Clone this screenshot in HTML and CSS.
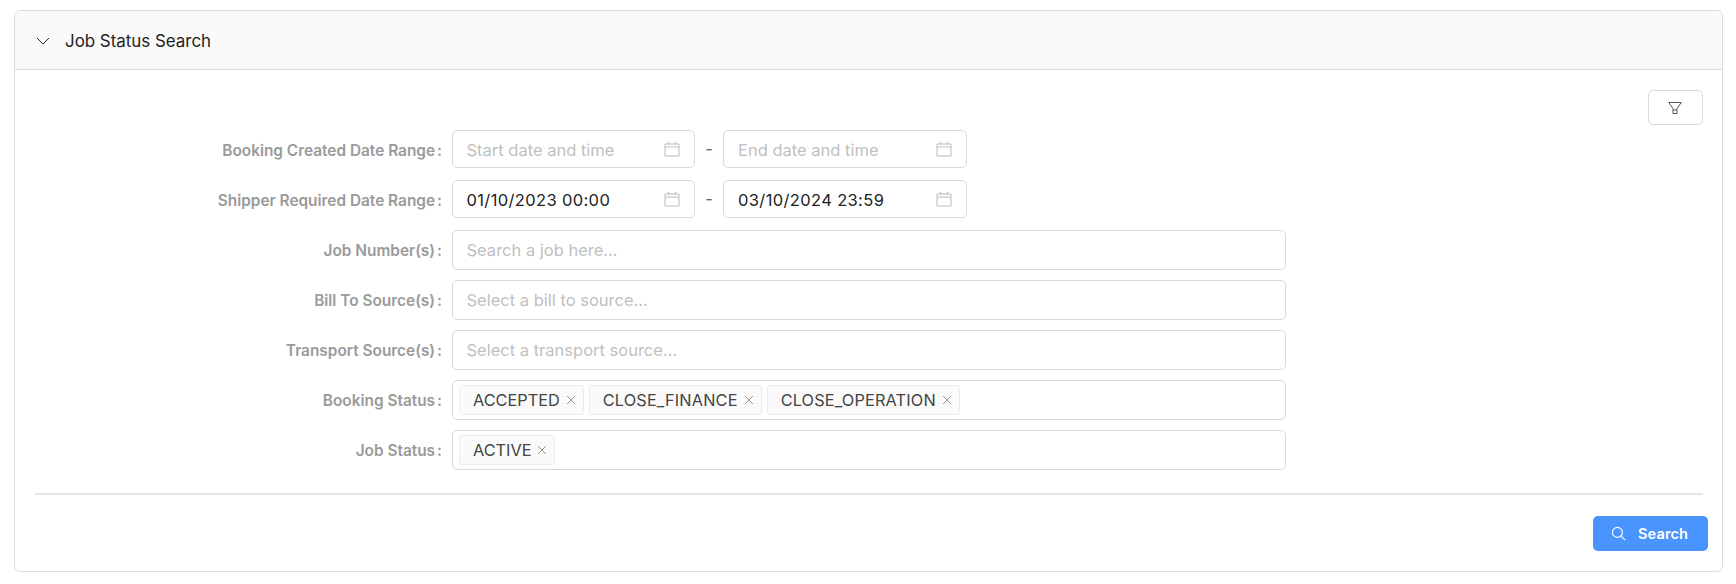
FILE: index.html
```html
<!DOCTYPE html>
<html lang="en">
<head>
<meta charset="utf-8">
<title>Job Status Search</title>
<link rel="stylesheet" href="styles.css">
</head>
<body>
<section class="card">
  <header class="card-head">
    <svg class="chev" viewBox="0 0 14 14" width="14" height="14"><path d="M1 4 7 10l6-6" fill="none" stroke="#222" stroke-width="1"/></svg>
    <span class="title">Job Status Search</span>
  </header>
  <div class="card-body">
    <div class="tools">
      <button class="filter-btn" type="button" aria-label="Filter">
        <svg viewBox="0 0 14 14" width="14" height="14"><path d="M.8 1.500h12.400L9 7.500v5H5v-5zM5 9h4" fill="none" stroke="#555" stroke-width="1"/></svg>
      </button>
    </div>
    <form class="form">
      <label class="lbl">Booking Created Date Range<i>:</i></label>
      <div class="range">
        <div class="date"><span class="ph">Start date and time</span><svg class="cal" viewBox="0 0 16 16" width="16" height="16"><path d="M1 3h14v12H1zM1 6h14M4.500 1v3M11.500 1v3" fill="none" stroke="#bdbdbd" stroke-width="1"/></svg></div>
        <span class="dash">-</span>
        <div class="date end"><span class="ph">End date and time</span><svg class="cal" viewBox="0 0 16 16" width="16" height="16"><path d="M1 3h14v12H1zM1 6h14M4.500 1v3M11.500 1v3" fill="none" stroke="#bdbdbd" stroke-width="1"/></svg></div>
      </div>
      <label class="lbl">Shipper Required Date Range<i>:</i></label>
      <div class="range">
        <div class="date"><span class="val">01/10/2023 00:00</span><svg class="cal" viewBox="0 0 16 16" width="16" height="16"><path d="M1 3h14v12H1zM1 6h14M4.500 1v3M11.500 1v3" fill="none" stroke="#bdbdbd" stroke-width="1"/></svg></div>
        <span class="dash">-</span>
        <div class="date end"><span class="val">03/10/2024 23:59</span><svg class="cal" viewBox="0 0 16 16" width="16" height="16"><path d="M1 3h14v12H1zM1 6h14M4.500 1v3M11.500 1v3" fill="none" stroke="#bdbdbd" stroke-width="1"/></svg></div>
      </div>
      <label class="lbl">Job Number(s)<i>:</i></label>
      <div class="field"><span class="ph">Search a job here...</span></div>
      <label class="lbl">Bill To Source(s)<i>:</i></label>
      <div class="field"><span class="ph">Select a bill to source...</span></div>
      <label class="lbl">Transport Source(s)<i>:</i></label>
      <div class="field"><span class="ph">Select a transport source...</span></div>
      <label class="lbl">Booking Status<i>:</i></label>
      <div class="field tags">
        <span class="tag">ACCEPTED<svg viewBox="0 0 10 10" width="10" height="10"><path d="M1 1l8 8M9 1l-8 8" stroke="#999" stroke-width="1"/></svg></span>
        <span class="tag tag-long">CLOSE_FINANCE<svg viewBox="0 0 10 10" width="10" height="10"><path d="M1 1l8 8M9 1l-8 8" stroke="#999" stroke-width="1"/></svg></span>
        <span class="tag tag-long">CLOSE_OPERATION<svg viewBox="0 0 10 10" width="10" height="10"><path d="M1 1l8 8M9 1l-8 8" stroke="#999" stroke-width="1"/></svg></span>
      </div>
      <label class="lbl">Job Status<i>:</i></label>
      <div class="field tags">
        <span class="tag">ACTIVE<svg viewBox="0 0 10 10" width="10" height="10"><path d="M1 1l8 8M9 1l-8 8" stroke="#999" stroke-width="1"/></svg></span>
      </div>
    </form>
    <hr class="rule">
    <div class="actions">
      <button class="search-btn" type="button">
        <svg viewBox="0 0 16 16" width="15" height="15"><circle cx="6.800" cy="6.800" r="5.300" fill="none" stroke="#fff" stroke-width="1.200"/><path d="M10.800 10.800 15 15" stroke="#fff" stroke-width="1.200"/></svg>
        <span>Search</span>
      </button>
    </div>
  </div>
</section>
</body>
</html>
```
FILE: styles.css
```css
* { box-sizing: border-box; }
html, body { margin: 0; background: #fff; }
body { padding: 10px 13px 12px 14px; font-family: Inter, "Liberation Sans", sans-serif; font-size: 16.500px; color: #222; height: 584px; }
.card { border: 1px solid #dcdcdc; border-radius: 6px; height: 562px; overflow: hidden; }
.card-head { height: 59px; background: #fafafa; border-bottom: 1px solid #dcdcdc; display: flex; align-items: center; padding: 1px 0 0 21px; gap: 15px; }
.title { font-size: 16.900px; color: #222; }
.card-body { padding: 20px 20px 0 20px; }
.tools { display: flex; justify-content: flex-end; height: 35px; margin-right: -1px; }
.filter-btn { width: 55px; height: 35px; padding: 0 2px 0 0; background: #fff; border: 1px solid #d9d9d9; border-radius: 5px; display: flex; align-items: center; justify-content: center; }
.form { display: grid; grid-template-columns: 407px 834px; row-gap: 10px; column-gap: 10px; margin-top: 5px; align-items: center; }
.lbl { text-align: right; font-weight: 600; font-size: 15.400px; color: #9a9a9a; white-space: nowrap; }
.lbl i { font-style: normal; margin-left: 2px; }
.range { display: flex; align-items: flex-start; height: 40px; }
.date { width: 243px; height: 38px; border: 1px solid #d9d9d9; border-radius: 5px; display: flex; align-items: center; justify-content: space-between; padding: 0 14px 0 13.500px; }
.date.end { width: 244px; padding-left: 14px; }
.date span { padding-top: 1px; }
.dash { width: 28px; height: 38px; line-height: 38px; text-align: center; color: #666; }
.cal { flex: none; }
.ph { color: #bfbfbf; }
.val { color: #222; letter-spacing: .36px; }
.field { height: 40px; border: 1px solid #d9d9d9; border-radius: 5px; display: flex; align-items: center; padding: 0 14px 0 13.500px; }
.tags { padding: 0 6px; gap: 5px; }
.tag { height: 30px; background: #fafafa; border: 1px solid #ececec; border-radius: 3px; display: inline-flex; align-items: center; gap: 6px; padding: 0 7px 0 13px; font-size: 16.300px; color: #444; }
.tag-long { letter-spacing: .17px; }
.rule { border: 0; height: 2px; background: #e6e6e6; margin: 23px -1px 0 0; }
.actions { display: flex; justify-content: flex-end; margin-top: 21px; margin-right: -6px; }
.search-btn { width: 115px; height: 35px; padding: 0 2px 0 0; background: #4a94ff; border: 0; border-radius: 5px; color: #fff; font: 600 14.700px Inter, "Liberation Sans", sans-serif; display: flex; align-items: center; justify-content: center; gap: 12px; }
```
